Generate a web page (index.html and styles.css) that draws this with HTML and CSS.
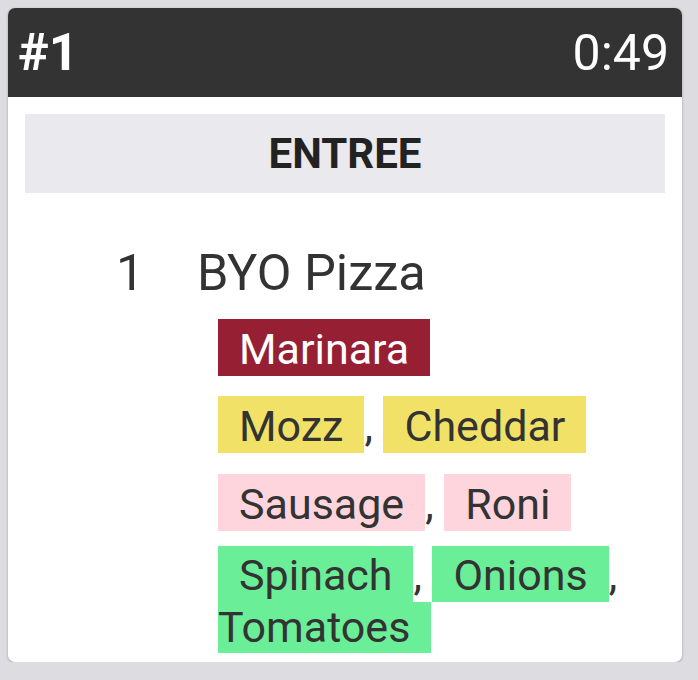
FILE: index.html
```html
<!DOCTYPE html>
<html>
<head>
<meta charset="utf-8">
<link rel="stylesheet" href="styles.css">
</head>
<body>
<div class="card">
  <div class="card-header">
    <span class="ticket-no">#1</span>
    <span class="timer">0:49</span>
  </div>
  <div class="card-body">
    <div class="section">ENTREE</div>
    <div class="item">
      <div class="qty">1</div>
      <div class="item-main">
        <div class="item-name">BYO Pizza</div>
        <div class="mods">
          <div class="mod-row mod-row-first">
            <span class="mod mod-sauce">Marinara</span>
          </div>
          <div class="mod-row mod-row-cheese">
            <span class="mod mod-cheese">Mozz</span><span class="comma">,</span><span class="mod mod-cheese">Cheddar</span>
          </div>
          <div class="mod-row mod-row-meat">
            <span class="mod mod-meat">Sausage</span><span class="comma">,</span><span class="mod mod-meat">Roni</span>
          </div>
          <div class="mod-row mod-row-veg">
            <span class="mod mod-veg mod-veg-first">Spinach</span><span class="comma">,</span><span class="mod mod-veg mod-veg-first">Onions</span><span class="comma">,</span>
          </div>
          <div class="mod-row mod-row-wrap">
            <span class="mod mod-veg mod-wrapped">Tomatoes</span>
          </div>
        </div>
      </div>
    </div>
  </div>
</div>
</body>
</html>
```
FILE: styles.css
```css
html, body {
  margin: 0;
  padding: 0;
}
body {
  background: #dcdce1;
  font-family: Roboto, "Noto Sans", sans-serif;
  color: #333333;
  padding: 8px 16px 0 8px;
  width: 674px;
}
.card {
  background: #ffffff;
  border-radius: 7px;
  overflow: hidden;
  box-shadow: 0 1px 3px rgba(0, 0, 0, 0.28);
  padding-bottom: 9px;
}
.card-header {
  background: #333333;
  color: #ffffff;
  height: 89px;
  display: flex;
  align-items: center;
  justify-content: space-between;
  padding: 0 13px 0 10px;
}
.ticket-no {
  font-weight: 700;
  font-size: 52px;
  line-height: 1;
}
.timer {
  font-weight: 400;
  font-size: 50px;
  line-height: 1;
}
.card-body {
  padding: 17px 17px 0 17px;
}
.section {
  background: #e9e9ee;
  height: 79px;
  display: flex;
  align-items: center;
  justify-content: center;
  font-weight: 700;
  font-size: 42px;
  color: #222222;
}
.item {
  display: grid;
  grid-template-columns: 172px 1fr;
  margin-top: 49px;
}
.qty {
  font-size: 50.5px;
  line-height: 61px;
  padding-left: 91px;
}
.item-name {
  font-size: 50.5px;
  line-height: 61px;
}
.mods {
  margin-left: 21px;
  margin-top: 16px;
  font-size: 43px;
}
.mod-row {
  display: flex;
  align-items: baseline;
}
.mod-row-cheese {
  margin-top: 20px;
}
.mod-row-meat {
  margin-top: 21px;
}
.mod-row-veg {
  margin-top: 15px;
}
.mod {
  display: inline-block;
  padding: 3px 21px 0 21px;
  line-height: 54px;
  white-space: nowrap;
}
.mod-veg-first {
  padding-top: 3px;
  line-height: 53px;
}
.mod-wrapped {
  padding: 0 21px 0 0;
  line-height: 51px;
}
.comma {
  display: inline-block;
  width: 19px;
}
.mod-sauce {
  background: #961f34;
  color: #ffffff;
}
.mod-cheese {
  background: #f1e166;
}
.mod-meat {
  background: #fed5dd;
}
.mod-veg {
  background: #6aee97;
}
```
